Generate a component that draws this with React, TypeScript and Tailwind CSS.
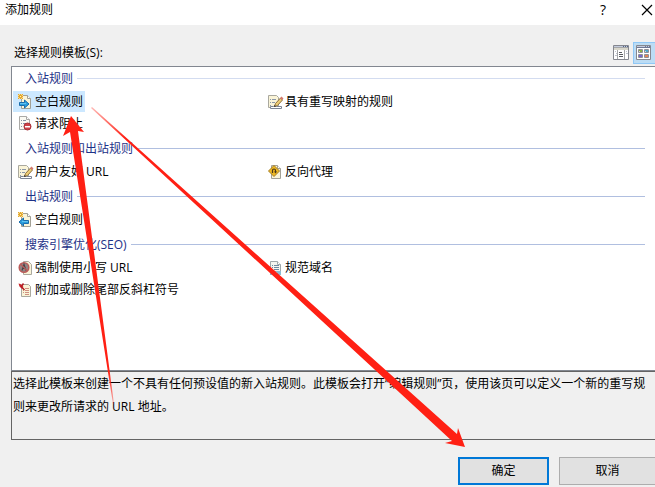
import { useState, type ReactNode } from 'react'

type IconName = 'inbound' | 'block' | 'rewrite' | 'proxy' | 'outbound' | 'lower' | 'domain' | 'slash'

const groups: { title: string; line: string; items: { id: string; label: string; icon: IconName }[] }[] = [
  {
    title: '入站规则',
    line: 'bg-[#d3dcf0]',
    items: [
      { id: 'in-blank', label: '空白规则', icon: 'inbound' },
      { id: 'in-map', label: '具有重写映射的规则', icon: 'rewrite' },
      { id: 'in-block', label: '请求阻止', icon: 'block' },
    ],
  },
  {
    title: '入站规则和出站规则',
    line: 'bg-[#b0bfe0]',
    items: [
      { id: 'friendly', label: '用户友好 URL', icon: 'rewrite' },
      { id: 'proxy', label: '反向代理', icon: 'proxy' },
    ],
  },
  {
    title: '出站规则',
    line: 'bg-[#b0bfe0]',
    items: [{ id: 'out-blank', label: '空白规则', icon: 'outbound' }],
  },
  {
    title: '搜索引擎优化(SEO)',
    line: 'bg-[#b0bfe0]',
    items: [
      { id: 'lower', label: '强制使用小写 URL', icon: 'lower' },
      { id: 'domain', label: '规范域名', icon: 'domain' },
      { id: 'slash', label: '附加或删除尾部反斜杠符号', icon: 'slash' },
    ],
  },
]

function Page() {
  return (
    <>
      <path d="M3.5 1.5h6l3 3v10h-9z" fill="#faf4d8" stroke="#a3a196" />
      <path d="M9.5 1.5v3h3" fill="#fff" stroke="#a3a196" />
    </>
  )
}

function Spark() {
  return (
    <>
      <path d="M0 0h5v5H0z" fill="#f8dc94" />
      <path d="M2.500 0v5M0 2.500h5M0 0l5 5M5 0L0 5" stroke="#e3a72e" />
      <path d="M2 2h1v1H2z" fill="#fff3b0" />
    </>
  )
}

const drawings: Record<IconName, ReactNode> = {
  inbound: (
    <>
      <Page />
      <Spark />
      <path d="M1.500 8.500h5v-2.500l4.500 4-4.500 4v-2.500h-5z" fill="#2b9fdf" stroke="#1b6cab" />
      <path d="M2 9.500h6" stroke="#63c3f0" />
    </>
  ),
  outbound: (
    <>
      <Page />
      <Spark />
      <path d="M10.500 8.500h-5v-2.500l-4.500 4 4.500 4v-2.500h5z" fill="#2b9fdf" stroke="#1b6cab" />
      <path d="M4 9.500h6" stroke="#63c3f0" />
    </>
  ),
  block: (
    <>
      <path d="M1.500 .5h7l3 3v10h-10z" fill="#fbfaf3" stroke="#aaa9a6" />
      <path d="M8.500 .5v3h3" fill="#fff" stroke="#aaa9a6" />
      <path d="M3 4.500h1M5 4.500h3M3 7.500h1M5 7.500h3M3 10.500h1" stroke="#8793a5" />
      <circle cx="9.500" cy="10.500" r="3.500" fill="#cf4247" stroke="#a82f37" />
      <path d="M7 10h5v1.500H7z" fill="#fff" />
    </>
  ),
  rewrite: (
    <>
      <path d="M.5 1.500h8l2 2v10H.5z" fill="#faf4d8" stroke="#aaa99f" />
      <path d="M2 5.500h1M4 5.500h4M2 8.500h1M4 8.500h3M2 11.500h1" stroke="#8b98a8" />
      <path d="M2.500 14.500v-2h3l1-1 2 1h5v2z" fill="#fff" stroke="#7c8594" />
      <path d="M6.500 12.500l1-3 5-5.500 2 2-5 5.500z" fill="#edcd74" stroke="#8e713f" />
      <path d="M12 4l1.500-1.500 2 2L14 6z" fill="#d7786c" />
      <path d="M6 13l.5-2 1.500 1.500z" fill="#333" />
    </>
  ),
  proxy: (
    <>
      <Page />
      <path d="M6 1.500l5.500 5.500L6 12.500.5 7z" fill="#efb921" stroke="#a37a1e" />
      <path d="M4.500 9V6.500q0-1.500 1.500-1.500t1.500 1.500V8" fill="none" stroke="#4b3718" strokeWidth="1.200" />
      <path d="M6 7.500h3L7.500 9.500z" fill="#4b3718" />
    </>
  ),
  lower: (
    <>
      <path d="M5.500 1.500h5l3 3v10h-8z" fill="#faf4d8" stroke="#aaa99f" />
      <circle cx="6" cy="7.500" r="4.800" fill="#918786" stroke="#bb5a58" strokeWidth="1.500" />
      <path d="M4 10.500l2-6 2 6M4.500 8.500h3" fill="none" stroke="#4a4446" strokeWidth="1.200" />
      <path d="M2.500 4l7 7" stroke="#bb5a58" strokeWidth="1.200" />
    </>
  ),
  domain: (
    <>
      <path d="M2.500 1.500h7l3 3v10h-10z" fill="#f3f5ef" stroke="#a0a8aa" />
      <path d="M9.500 1.500v3h3" fill="#fff" stroke="#a0a8aa" />
      <path d="M4 5.500h1M6 5.500h5M4 7.500h1M6 7.500h5M4 9.500h1M6 9.500h5" stroke="#6d89a1" />
      <path d="M2 11h11v4H2z" fill="#8dbdd4" />
      <path d="M3 12.500h6" stroke="#d5eef7" />
    </>
  ),
  slash: (
    <>
      <path d="M3.500 2.500h7l2 2v10h-9z" fill="#faf4d8" stroke="#aaa99f" />
      <path d="M5 6.500h1M7 6.500h4M5 8.500h1M7 8.500h4M5 10.500h1M7 10.500h4M7 12.500h4" stroke="#cf9082" />
      <path d="M.5 1.500l2 .5 3 3-2 1.500-2-2z" fill="#c92228" />
      <path d="M5.500 1.500L3 5M3.500 5l3 3" stroke="#b51d24" strokeWidth="1.500" />
    </>
  ),
}

function Icon({ name }: { name: IconName }) {
  return (
    <svg className="size-4 shrink-0" viewBox="0 0 16 16" aria-hidden="true">
      {drawings[name]}
    </svg>
  )
}

function DetailsIcon() {
  return (
    <svg className="size-4" viewBox="0 0 16 16" aria-hidden="true">
      <path d="M.5 .5h15v14H.5z" fill="#fff" stroke="#85878f" />
      <path d="M1 1h14v1H1z" fill="#c3cbdc" />
      <path d="M10 1.500h1M12 1.500h1M14 1.500h1" stroke="#526486" />
      <path d="M1 3h14v2H1z" fill="#d9d7cb" />
      <path d="M1 2.500h14M4.500 5v9M11.500 5v9" stroke="#a5a6a8" />
      <path d="M2 6.500h1M3 8.500h1M2 10.500h2M13 6.500h1M13 8.500h2" stroke="#bdc2ce" />
      <path d="M6 7.500h3M6 9.500h4M6 11.500h4" stroke="#595b60" />
    </svg>
  )
}

function TilesIcon() {
  return (
    <svg className="size-4" viewBox="0 0 16 16" aria-hidden="true">
      <path d="M.5 .5h14v14H.5z" fill="#fff" stroke="#85878f" />
      <path d="M1 1h13v1H1z" fill="#c3cbdc" />
      <path d="M9 1.500h1M11 1.500h1M13 1.500h1M1 2.500h13" stroke="#6d7895" />
      <path d="M2.500 4.500h4v3h-4zM8.500 4.500h4v3h-4zM2.500 9.500h4v3h-4zM8.500 9.500h4v3h-4z" fill="#d5d6d4" stroke="#8e8f96" />
      <path d="M3 5h3v1H3zM4 6h2v1H4z" fill="#8cae45" />
      <path d="M9 5h3v1H9zM10 6h2v1h-2z" fill="#4ba6cc" />
      <path d="M3 10h3v2H3z" fill="#7768cb" />
      <path d="M9 10h3v2H9z" fill="#e28557" />
    </svg>
  )
}

// hand drawn pointers: blank rule, then the confirm button
function Arrows() {
  return (
    <svg className="pointer-events-none absolute top-0 left-0" width="655" height="487" viewBox="0 0 655 487" aria-hidden="true">
      <defs>
        <linearGradient id="up" gradientUnits="userSpaceOnUse" x1="113" y1="404" x2="109" y2="372">
          <stop offset="0" stopColor="#ff2014" stopOpacity="0.3" />
          <stop offset="1" stopColor="#ff2014" />
        </linearGradient>
        <linearGradient id="down" gradientUnits="userSpaceOnUse" x1="91" y1="107" x2="125" y2="138">
          <stop offset="0" stopColor="#ff2014" stopOpacity="0.3" />
          <stop offset="1" stopColor="#ff2014" />
        </linearGradient>
      </defs>
      <path d="M71 116L84 132L78 131L114 404L113 404L70 132L63 136Z" fill="url(#up)" />
      <path d="M465 447L458 428L457 434L92 107L91 108L452 441L445 443Z" fill="url(#down)" />
    </svg>
  )
}

export default function App() {
  const [selected, setSelected] = useState('in-blank')
  const [view, setView] = useState<'details' | 'tiles'>('tiles')

  return (
    <main className="relative flex min-h-screen flex-col overflow-hidden bg-[#f0f0f0] font-['Open_Sans','Noto_Sans_CJK_SC',sans-serif] text-xs text-black">
      <header className="flex h-[25px] items-start justify-between bg-white pl-[5px]">
        <h1 className="leading-5">添加规则</h1>
        <div className="flex">
          <button aria-label="帮助" className="w-5 text-sm leading-5 font-medium">?</button>
          <button aria-label="关闭" className="ml-7 flex h-5 w-[14px] items-center justify-start">
            <svg className="size-3" viewBox="0 0 12 12" aria-hidden="true">
              <path d="M1 1l10 10M11 1L1 11" stroke="#000" strokeWidth="1.200" />
            </svg>
          </button>
        </div>
      </header>

      <div className="mt-4 flex h-[23px] items-center justify-between pl-[14px]">
        <h2 id="templates">选择规则模板(S):</h2>
        <div className="flex h-[22px]" role="toolbar">
          <button
            aria-label="详细信息"
            onClick={() => setView('details')}
            className={`flex w-6 items-center justify-center border ${view === 'details' ? 'border-[#90c8f6] bg-[#bcdcf4]' : 'border-transparent'}`}
          >
            <DetailsIcon />
          </button>
          <button
            aria-label="平铺"
            onClick={() => setView('tiles')}
            className={`flex w-[22px] items-center justify-start border border-r-0 pl-[2px] ${view === 'tiles' ? 'border-[#90c8f6] bg-[#bcdcf4]' : 'border-transparent'}`}
          >
            <TilesIcon />
          </button>
        </div>
      </div>

      <section aria-labelledby="templates" className="mt-[2px] ml-[11px] min-h-[305px] border-y border-l border-[#828790] bg-white">
        {groups.map((group) => (
          <div key={group.title} className="mb-[2px]">
            <div className="flex h-[23px] items-center gap-1 pr-[10px] pl-[13px]">
              <h3 className="text-[#1e3287]">{group.title}</h3>
              <div className={`h-px flex-1 ${group.line}`} />
            </div>
            <ul className="mt-px ml-px grid grid-cols-[250px_250px]">
              {group.items.map((item) => (
                <li key={item.id} className="flex h-[22px]">
                  <button
                    onClick={() => setSelected(item.id)}
                    className={`flex h-[21px] items-center gap-px pr-[2px] pl-[5px] ${selected === item.id ? 'bg-[#cce8ff]' : ''}`}
                  >
                    <Icon name={item.icon} />
                    {item.label}
                  </button>
                </li>
              ))}
            </ul>
          </div>
        ))}
      </section>

      <p className="ml-[11px] min-h-[69px] border-y border-l border-[#646464] pr-1 pl-px leading-[23px]">
        选择此模板来创建一个不具有任何预设值的新入站规则。此模板会打开“编辑规则”页，使用该页可以定义一个新的重写规则来更改所请求的 URL 地址。
      </p>

      <footer className="mt-[17px] flex justify-end gap-[10px]">
        <button className="h-7 w-[91px] border-2 border-[#0078d7] bg-[#e1e1e1]">确定</button>
        <button className="h-7 w-24 border border-r-0 border-[#adadad] bg-[#e1e1e1]">取消</button>
      </footer>

      <Arrows />
    </main>
  )
}
